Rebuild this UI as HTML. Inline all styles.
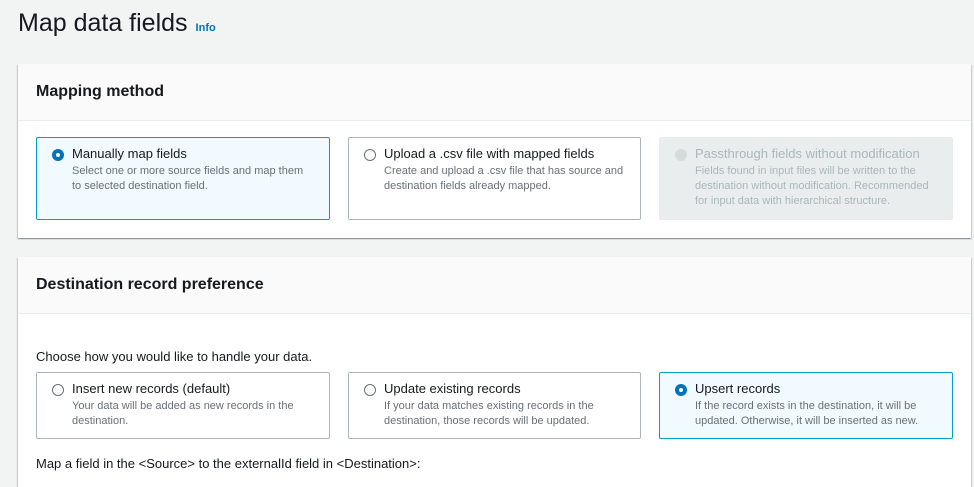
<!DOCTYPE html>
<html><head><style>
body{margin:0;width:974px;height:471px;overflow:hidden;background:#f2f3f3;font-family:"Liberation Sans",Arial,sans-serif;color:#16191f;position:relative}
.abs{position:absolute}
h1{position:absolute;left:18px;top:9px;margin:0;font-size:25px;font-weight:normal;color:#16191f}
h1 span{font-size:11px;font-weight:bold;color:#0073bb;margin-left:8px}
.panel{position:absolute;left:18px;width:953px;background:#fff;box-shadow:0 1px 1px rgba(0,28,36,.3),1px 1px 1px rgba(0,28,36,.15),-1px 1px 1px rgba(0,28,36,.15)}
.ph{height:56px;background:#fafafa;border-bottom:1px solid #eaeded;font-weight:bold;font-size:16px;padding-left:18px;line-height:56px}
.card{position:absolute;box-sizing:border-box;border:1px solid #aab7b8;border-radius:2px;background:#fff;padding:8px 0 0 35px}
.card.sel{border-color:#00a1c9;background:#f1faff}
.card.dis{border-color:#eaeded;background:#eaeded}
.card .r{position:absolute;left:15px;top:11px;width:10px;height:10px;border:1px solid #687078;border-radius:50%;background:#fff}
.card.sel .r{border:4px solid #0073bb;width:4px;height:4px}
.card.dis .r{border-color:#d5dbdb;background:#d5dbdb}
.t{font-size:13px;line-height:16px}
.d{font-size:11px;line-height:15px;color:#687078;margin-top:2px}
.dis .t,.dis .d{color:#aab7b8}
</style></head><body>
<h1>Map data fields<span>Info</span></h1>
<div class="panel" style="top:64px;height:174px">
<div class="ph">Mapping method</div>
</div>
<div class="card sel" style="left:36px;top:137px;width:294px;height:83px"><div class="r"></div><div class="t">Manually map fields</div><div class="d">Select one or more source fields and map them<br>to selected destination field.</div></div>
<div class="card" style="left:348px;top:137px;width:293px;height:83px"><div class="r"></div><div class="t">Upload a .csv file with mapped fields</div><div class="d">Create and upload a .csv file that has source and<br>destination fields already mapped.</div></div>
<div class="card dis" style="left:659px;top:137px;width:294px;height:83px"><div class="r"></div><div class="t">Passthrough fields without modification</div><div class="d">Fields found in input files will be written to the<br>destination without modification. Recommended<br>for input data with hierarchical structure.</div></div>

<div class="panel" style="top:257px;height:230px">
<div class="ph">Destination record preference</div>
</div>
<div class="abs" style="left:36px;top:349px;font-size:13px">Choose how you would like to handle your data.</div>
<div class="card" style="left:36px;top:372px;width:294px;height:67px"><div class="r"></div><div class="t">Insert new records (default)</div><div class="d">Your data will be added as new records in the<br>destination.</div></div>
<div class="card" style="left:348px;top:372px;width:293px;height:67px"><div class="r"></div><div class="t">Update existing records</div><div class="d">If your data matches existing records in the<br>destination, those records will be updated.</div></div>
<div class="card sel" style="left:659px;top:372px;width:294px;height:67px"><div class="r"></div><div class="t">Upsert records</div><div class="d">If the record exists in the destination, it will be<br>updated. Otherwise, it will be inserted as new.</div></div>
<div class="abs" style="left:36px;top:456px;font-size:13px">Map a field in the &lt;Source&gt; to the externalId field in &lt;Destination&gt;:</div>
</body></html>
